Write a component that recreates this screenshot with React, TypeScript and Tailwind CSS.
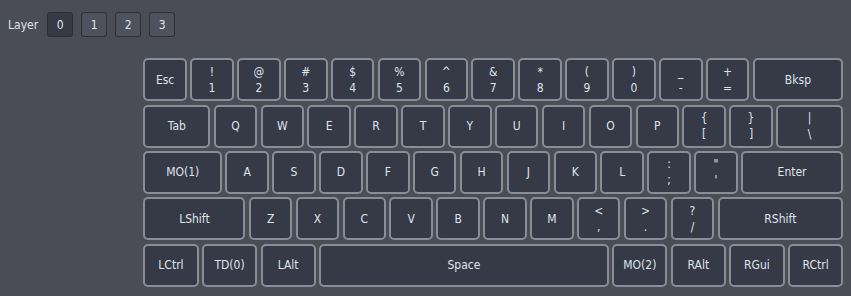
import React from "react";

type K = { t: string; b?: string; w?: number };

const W: Record<string, string> = {
  "1": "w-[43.56px]",
  "1.25": "w-[55.28px]",
  "1.5": "w-[67px]",
  "1.75": "w-[78.72px]",
  "2": "w-[90.45px]",
  "2.25": "w-[102.17px]",
  "2.75": "w-[125.62px]",
  "6.25": "w-[289.73px]",
};

const rows: K[][] = [
  [
    { t: "Esc" },
    { t: "!", b: "1" },
    { t: "@", b: "2" },
    { t: "#", b: "3" },
    { t: "$", b: "4" },
    { t: "%", b: "5" },
    { t: "^", b: "6" },
    { t: "&", b: "7" },
    { t: "*", b: "8" },
    { t: "(", b: "9" },
    { t: ")", b: "0" },
    { t: "_", b: "-" },
    { t: "+", b: "=" },
    { t: "Bksp", w: 2 },
  ],
  [
    { t: "Tab", w: 1.5 },
    { t: "Q" },
    { t: "W" },
    { t: "E" },
    { t: "R" },
    { t: "T" },
    { t: "Y" },
    { t: "U" },
    { t: "I" },
    { t: "O" },
    { t: "P" },
    { t: "{", b: "[" },
    { t: "}", b: "]" },
    { t: "|", b: "\\", w: 1.5 },
  ],
  [
    { t: "MO(1)", w: 1.75 },
    { t: "A" },
    { t: "S" },
    { t: "D" },
    { t: "F" },
    { t: "G" },
    { t: "H" },
    { t: "J" },
    { t: "K" },
    { t: "L" },
    { t: ":", b: ";" },
    { t: "\"", b: "'" },
    { t: "Enter", w: 2.25 },
  ],
  [
    { t: "LShift", w: 2.25 },
    { t: "Z" },
    { t: "X" },
    { t: "C" },
    { t: "V" },
    { t: "B" },
    { t: "N" },
    { t: "M" },
    { t: "<", b: "," },
    { t: ">", b: "." },
    { t: "?", b: "/" },
    { t: "RShift", w: 2.75 },
  ],
  [
    { t: "LCtrl", w: 1.25 },
    { t: "TD(0)", w: 1.25 },
    { t: "LAlt", w: 1.25 },
    { t: "Space", w: 6.25 },
    { t: "MO(2)", w: 1.25 },
    { t: "RAlt", w: 1.25 },
    { t: "RGui", w: 1.25 },
    { t: "RCtrl", w: 1.25 },
  ],
];

function Key({ k }: { k: K }) {
  const wc = W[String(k.w ?? 1)];
  return (
    <div
      className={`${wc} h-[43px] shrink-0 rounded-[5px] border-2 border-[#8a8d95] bg-[#363946] flex flex-col items-center justify-center text-[#dfe4ec] leading-[16px]`}
    >
      {k.b !== undefined ? (
        <>
          <span>{k.t}</span>
          <span>{k.b}</span>
        </>
      ) : (
        <span>{k.t}</span>
      )}
    </div>
  );
}

export default function App() {
  return (
    <div
      className="w-[851px] h-[296px] bg-[#4a4c56] text-[12px] text-[#dfe4ec] overflow-hidden"
      style={{ fontFamily: '"DejaVu Sans Condensed", "DejaVu Sans", sans-serif' }}
    >
      <div className="flex items-center pl-[8px] pt-[12px] h-[37px]">
        <span className="mr-[9px]">Layer</span>
        <div className="flex gap-[8px]">
          {["0", "1", "2", "3"].map((n, i) => (
            <div
              key={n}
              className={`w-[26px] h-[25px] rounded-[3px] border flex items-center justify-center ${
                i === 0
                  ? "bg-[#373a44] border-[#2c2e36]"
                  : "bg-[#4f525c] border-[#2e3038]"
              }`}
            >
              {n}
            </div>
          ))}
        </div>
      </div>
      <div className="ml-[143.33px] mt-[21.33px] flex flex-col gap-[3.33px]">
        {rows.map((r, i) => (
          <div key={i} className="flex gap-[3.33px]">
            {r.map((k, j) => (
              <Key key={j} k={k} />
            ))}
          </div>
        ))}
      </div>
    </div>
  );
}
